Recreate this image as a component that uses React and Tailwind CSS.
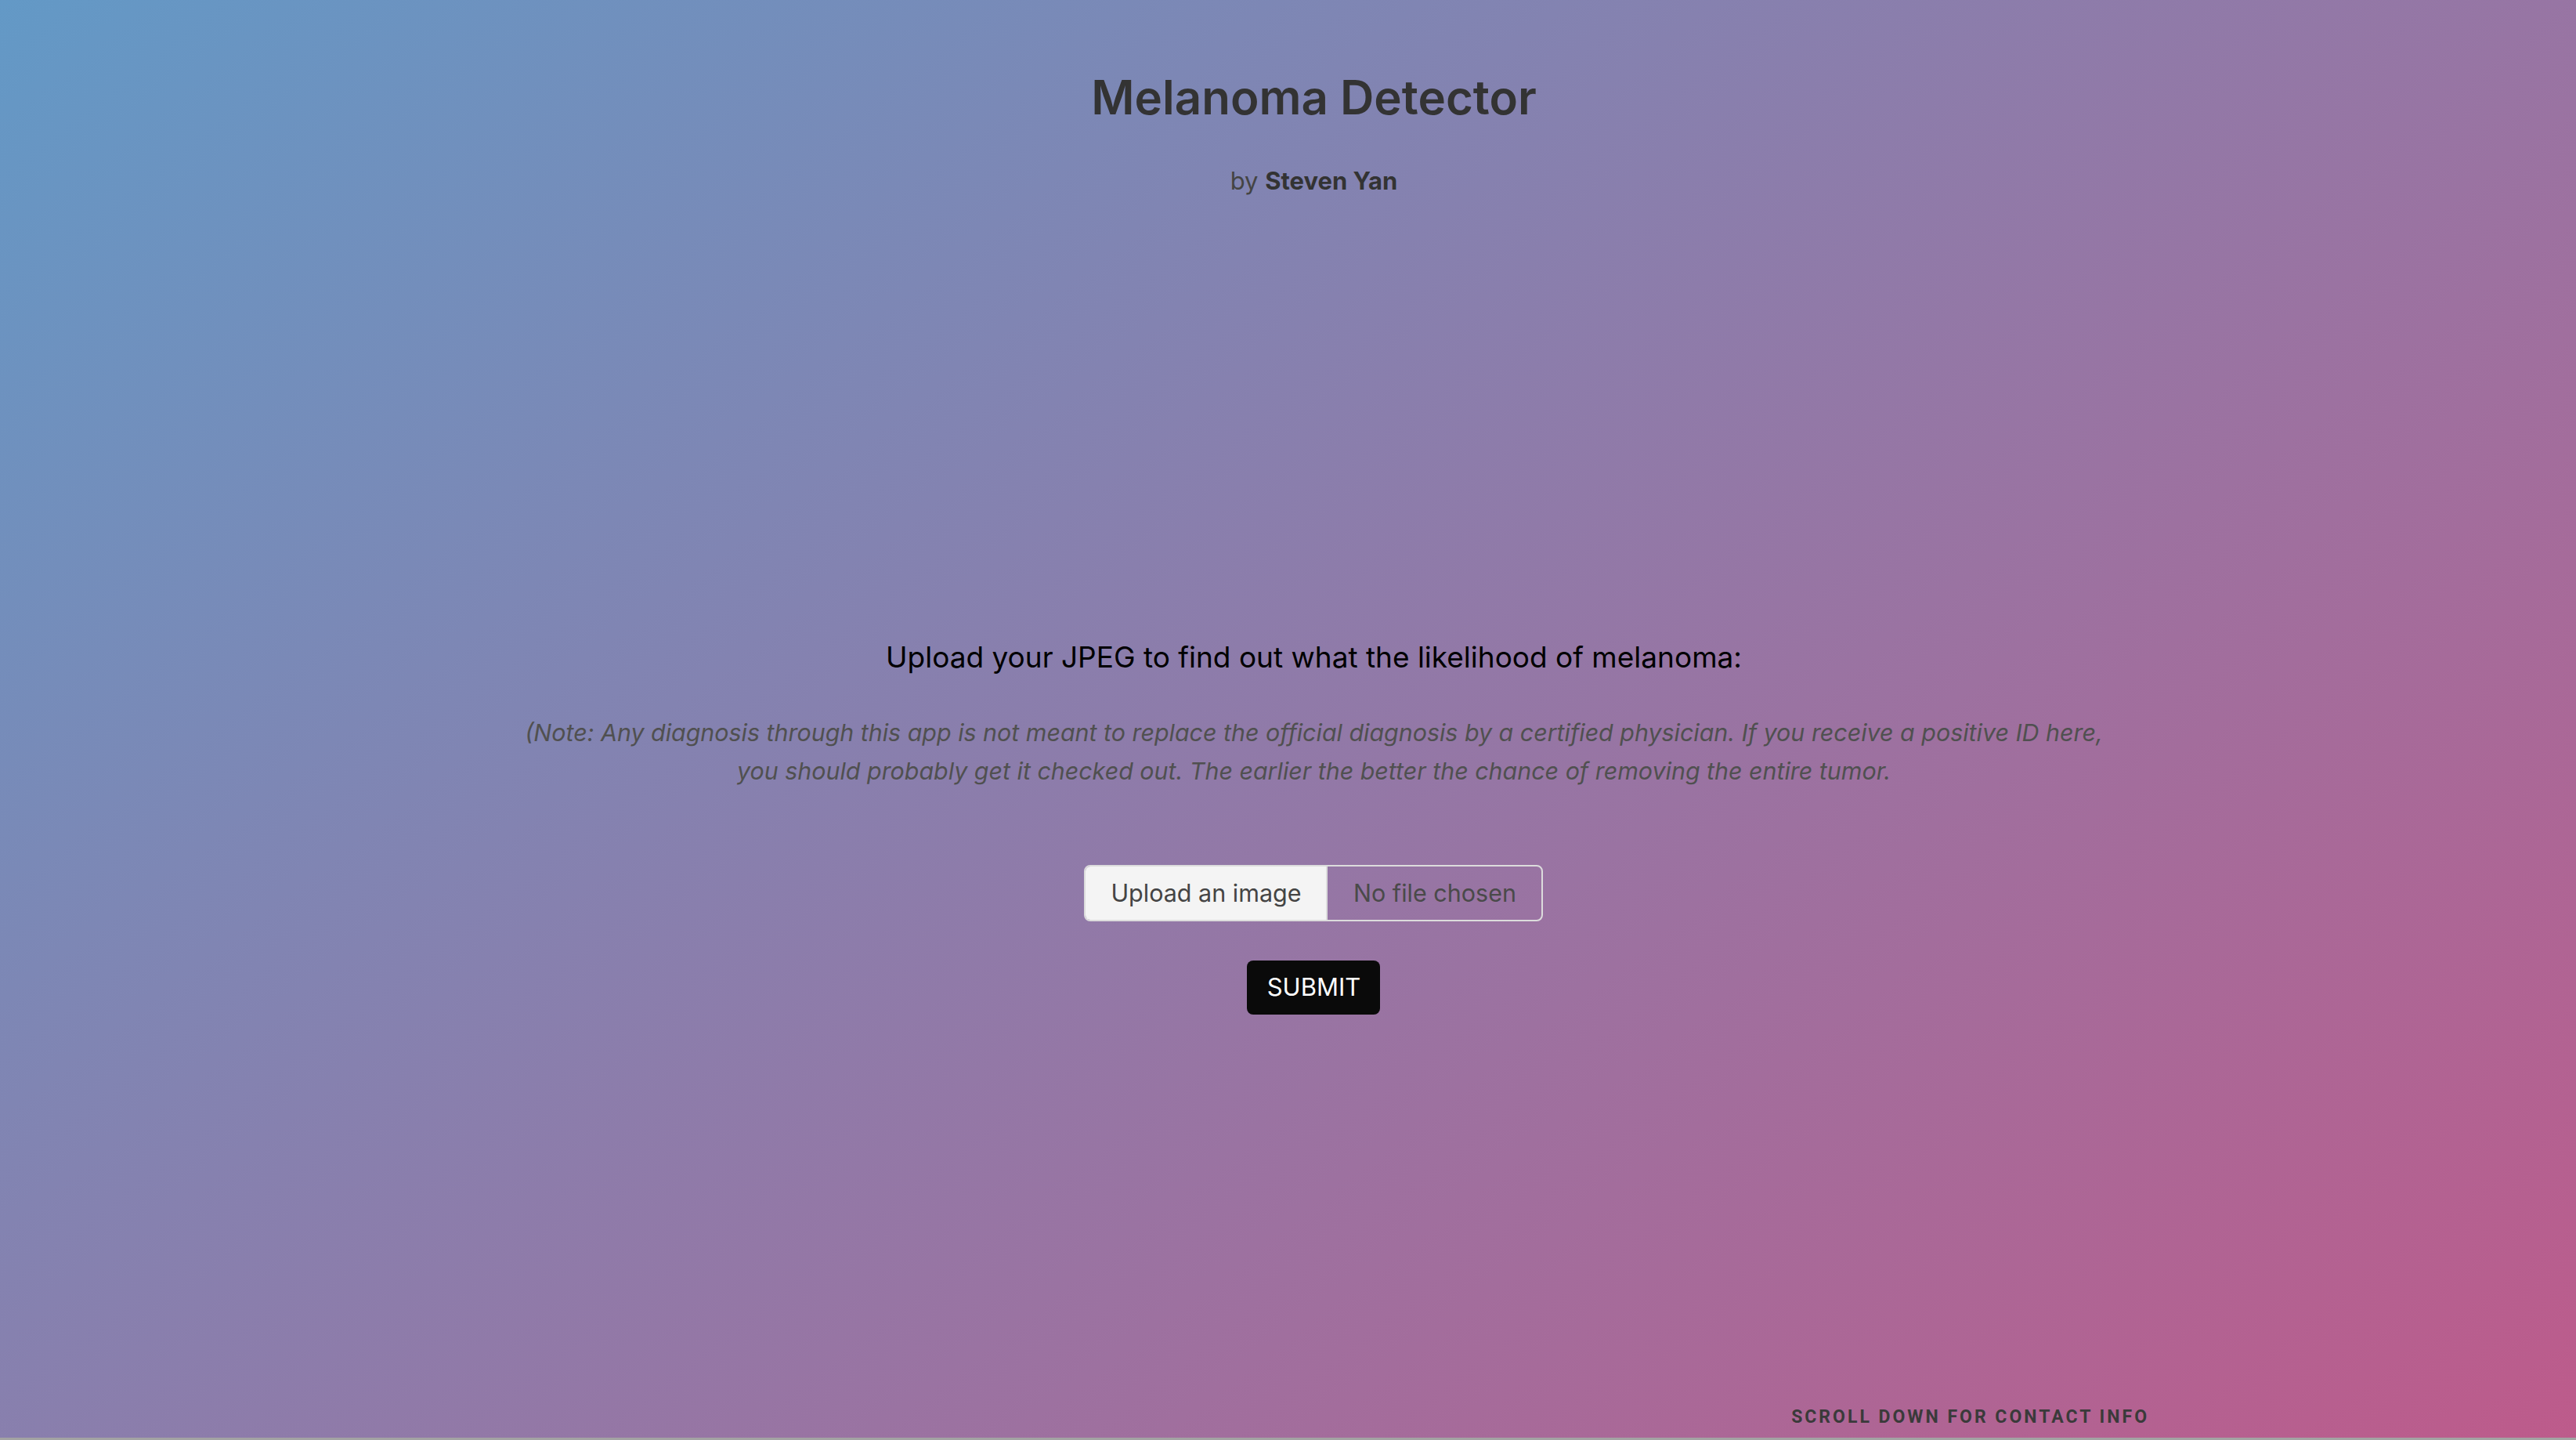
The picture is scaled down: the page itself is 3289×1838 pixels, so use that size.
import React from 'react';

export default function App() {
  return (
    <div className="min-h-screen w-full font-['Inter','Liberation_Sans',sans-serif]">
      <section className="flex flex-col items-center h-[1835px] pl-[66px] bg-[linear-gradient(142deg,#6399c6_0%,#bd5b8b_100%)]">
        <header className="flex flex-col items-center pt-[88px]">
          <h1 className="text-[60px] leading-[72px] font-semibold text-[#333]">Melanoma Detector</h1>
          <p className="mt-[51px] text-[31px] leading-[40px] text-[#444]">
            by <span className="font-bold text-[#333]">Steven Yan</span>
          </p>
        </header>

        <main className="flex flex-col items-center mt-[564px]">
          <h2 className="text-[37px] leading-[48px] text-black">
            Upload your JPEG to find out what the likelihood of melanoma:
          </h2>
          <p className="mt-[48px] text-center italic text-[30.4px] leading-[49px] text-[#505050]">
            (Note: Any diagnosis through this app is not meant to replace the official diagnosis by a certified physician. If you receive a positive ID here,
            <br />
            you should probably get it checked out. The earlier the better the chance of removing the entire tumor.
          </p>

          <div className="mt-[95px] flex h-[72px] w-[586px] overflow-hidden rounded-[8px] border-2 border-[#dcdcdc]">
            <label className="flex w-[309px] items-center justify-center bg-[#f4f4f4] text-[30.5px] text-[#444] border-r-2 border-[#dcdcdc]">
              Upload an image
            </label>
            <span className="flex flex-1 items-center justify-center text-[30.5px] text-[#4a4a4a]">No file chosen</span>
          </div>

          <button className="mt-[50px] h-[69px] w-[170px] rounded-[8px] bg-[#0a0a0a] text-[31px] text-white">
            SUBMIT
          </button>
        </main>

        <div className="mt-auto mb-[9px] flex w-full justify-end pr-[545px]">
          <span className="font-['Roboto',sans-serif] text-[23px] font-bold tracking-[3px] text-[#3a3a3a]">
            SCROLL DOWN FOR CONTACT INFO
          </span>
        </div>
      </section>
      <section className="bg-[#a3a3a3] pl-[628px]">
        <p className="text-[30px] leading-[36px] text-[#333]">
          to enable them to other developers. Feel free to reach out with the appropriate contact info.
        </p>
      </section>
    </div>
  );
}
